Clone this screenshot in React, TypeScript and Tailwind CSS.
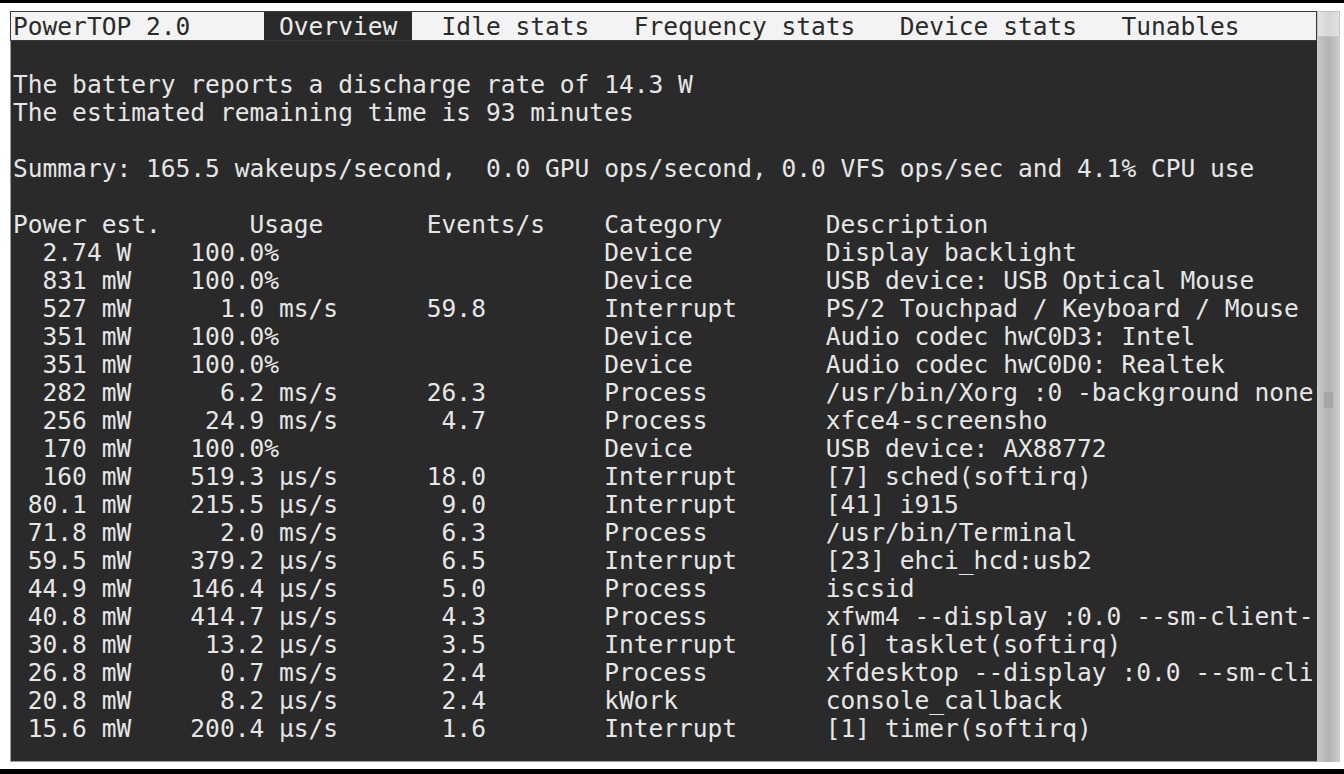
import React from "react";

type Row = [string, string, string, string, string];

const rows: Row[] = [
  ["2.74 W", "100.0%", "", "Device", "Display backlight"],
  ["831 mW", "100.0%", "", "Device", "USB device: USB Optical Mouse"],
  ["527 mW", "  1.0 ms/s", "59.8", "Interrupt", "PS/2 Touchpad / Keyboard / Mouse"],
  ["351 mW", "100.0%", "", "Device", "Audio codec hwC0D3: Intel"],
  ["351 mW", "100.0%", "", "Device", "Audio codec hwC0D0: Realtek"],
  ["282 mW", "  6.2 ms/s", "26.3", "Process", "/usr/bin/Xorg :0 -background none"],
  ["256 mW", " 24.9 ms/s", "4.7", "Process", "xfce4-screensho"],
  ["170 mW", "100.0%", "", "Device", "USB device: AX88772"],
  ["160 mW", "519.3 µs/s", "18.0", "Interrupt", "[7] sched(softirq)"],
  ["80.1 mW", "215.5 µs/s", "9.0", "Interrupt", "[41] i915"],
  ["71.8 mW", "  2.0 ms/s", "6.3", "Process", "/usr/bin/Terminal"],
  ["59.5 mW", "379.2 µs/s", "6.5", "Interrupt", "[23] ehci_hcd:usb2"],
  ["44.9 mW", "146.4 µs/s", "5.0", "Process", "iscsid"],
  ["40.8 mW", "414.7 µs/s", "4.3", "Process", "xfwm4 --display :0.0 --sm-client-"],
  ["30.8 mW", " 13.2 µs/s", "3.5", "Interrupt", "[6] tasklet(softirq)"],
  ["26.8 mW", "  0.7 ms/s", "2.4", "Process", "xfdesktop --display :0.0 --sm-cli"],
  ["20.8 mW", "  8.2 µs/s", "2.4", "kWork", "console_callback"],
  ["15.6 mW", "200.4 µs/s", "1.6", "Interrupt", "[1] timer(softirq)"],
];

function fmt(r: Row): string {
  return (
    r[0].padStart(8) +
    "    " +
    r[1].padEnd(10) +
    "      " +
    r[2].padStart(4) +
    "        " +
    r[3].padEnd(15) +
    r[4]
  );
}

const header =
  "Power est.".padEnd(16) +
  "Usage".padEnd(12) +
  "Events/s".padEnd(12) +
  "Category".padEnd(15) +
  "Description";

const lines: string[] = [
  "",
  "The battery reports a discharge rate of 14.3 W",
  "The estimated remaining time is 93 minutes",
  "",
  "Summary: 165.5 wakeups/second,  0.0 GPU ops/second, 0.0 VFS ops/sec and 4.1% CPU use",
  "",
  header,
  ...rows.map(fmt),
];

function Line({ text }: { text: string }) {
  return <div className="h-[28px] leading-[28px] whitespace-pre">{text === "" ? " " : text}</div>;
}

export default function App() {
  return (
    <div className="w-[1344px] h-[774px] bg-white flex flex-col overflow-hidden font-['DejaVu_Sans_Mono',monospace] text-[24.55px]">
      <div className="h-[3px] bg-black shrink-0" />
      <div className="h-[8px] shrink-0" />
      <div className="flex shrink-0 h-[751px]">
        <div className="w-[10px] shrink-0" />
        <div className="w-[1307px] flex flex-col shrink-0">
          <div className="h-[30px] border border-[#3a3a3a] bg-[#f3f3f3] text-[#2a2a2a] pl-[2px] overflow-hidden">
            <div className="h-[28px] leading-[29px] whitespace-pre">
              <span>{"PowerTOP 2.0     "}</span>
              <span className="bg-[#2a2a2a] text-[#ececec] inline-block h-[28px]">{" Overview "}</span>
              <span>{"  Idle stats   Frequency stats   Device stats   Tunables"}</span>
            </div>
          </div>
          <div className="h-[721px] bg-[#2a2a2a] text-[#e6e6e6] border-l border-b border-[#9a9a9a] pl-[2px] pt-[2px] overflow-hidden">
            {lines.map((l, i) => (
              <Line key={i} text={l} />
            ))}
          </div>
        </div>
        <div className="w-[27px] shrink-0 flex">
          <div className="w-[23px] flex flex-col">
            <div className="h-[26px] bg-gradient-to-r from-[#e6e6e6] via-[#d6d6d6] to-[#e2e2e2] border border-[#c4c4c4]" />
            <div className="flex-1 bg-gradient-to-r from-[#c9c9c9] via-[#b2b2b2] to-[#cfcfcf] flex flex-col">
              <div className="h-[355px]" />
              <div className="h-[16px] mx-[7px] bg-[#a6a6a6]" />
            </div>
          </div>
          <div className="w-[4px]" />
        </div>
      </div>
      <div className="h-[7px] shrink-0" />
      <div className="h-[5px] bg-black shrink-0" />
    </div>
  );
}
